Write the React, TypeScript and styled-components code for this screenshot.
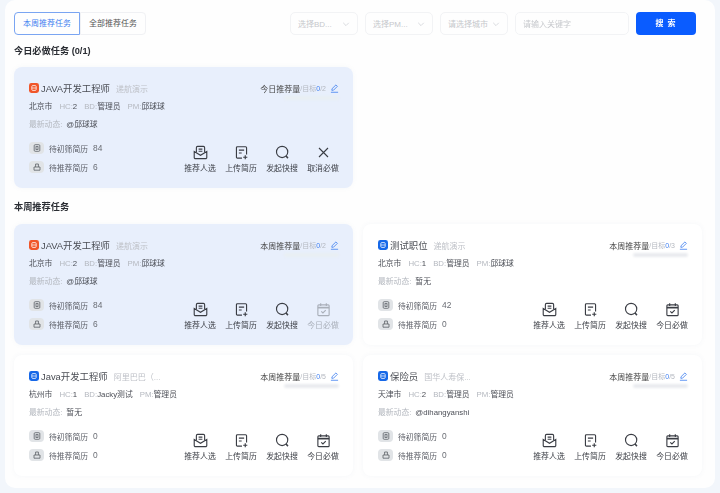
import styled, { createGlobalStyle } from "styled-components";

const GlobalStyle = createGlobalStyle`
  html, body {
    margin: 0;
    padding: 0;
    background: #f2f6fb;
    font-family: "Liberation Sans", "Noto Sans CJK SC", sans-serif;
  }
`;

const Panel = styled.div`
  box-sizing: border-box;
  width: 710px;
  height: 488px;
  margin-left: 5px;
  padding: 12px 13px 0 9px;
  background: #fefefe;
  border-radius: 10px;
  overflow: hidden;
  filter: blur(0.3px);
`;

const Toolbar = styled.div`
  display: flex;
  align-items: center;
  height: 23px;
  padding-right: 6px;
`;

const Tabs = styled.div`
  display: flex;
  margin-right: auto;
`;

const Tab = styled.div<{ $active?: boolean }>`
  box-sizing: border-box;
  width: 66px;
  height: 23px;
  line-height: 21px;
  text-align: center;
  font-size: 8px;
  color: ${(props) => (props.$active ? "#3f7ff0" : "#555")};
  border: 1px solid ${(props) => (props.$active ? "#7aa5f2" : "#f0f1f4")};
  border-radius: ${(props) => (props.$active ? "4px 0 0 4px" : "0 4px 4px 0")};
`;

const Filters = styled.div`
  display: flex;
  gap: 7px;
`;

const Select = styled.div`
  box-sizing: border-box;
  width: 68px;
  height: 23px;
  padding: 0 7px;
  display: flex;
  align-items: center;
  justify-content: space-between;
  font-size: 8px;
  color: #c6c8cc;
  border: 1px solid #f2f3f5;
  border-radius: 5px;
`;

const SearchInput = styled(Select)`
  width: 114px;
`;

const SearchButton = styled.div`
  width: 60px;
  height: 23px;
  line-height: 23px;
  text-align: center;
  font-size: 8px;
  font-weight: 700;
  letter-spacing: 1px;
  color: #fff;
  background: #0a5cff;
  border-radius: 4px;
`;

const SectionTitle = styled.div<{ $top: number; $bottom: number }>`
  margin: ${(props) => props.$top}px 0 ${(props) => props.$bottom}px;
  height: 13px;
  line-height: 13px;
  font-size: 9.2px;
  font-weight: 700;
  color: #2a2d33;
`;

const Grid = styled.div`
  display: grid;
  grid-template-columns: 339px 339px;
  gap: 10px;
`;

const Card = styled.div<{ $highlight?: boolean }>`
  box-sizing: border-box;
  height: 121px;
  padding: 14px 14px 0 15px;
  border-radius: 8px;
  background: ${(props) => (props.$highlight ? "#e8effc" : "#fff")};
  box-shadow: 0 0 5px rgba(120, 140, 170, ${(props) => (props.$highlight ? 0.06 : 0.07)});
`;

const TitleRow = styled.div`
  display: flex;
  align-items: center;
  height: 14px;
`;

const Logo = styled.svg`
  flex: none;
  width: 10px;
  height: 10px;
  margin-right: 2px;
`;

const Name = styled.span`
  font-size: 9.4px;
  color: #4a4d54;
`;

const Company = styled.span`
  margin-left: 6px;
  font-size: 8px;
  color: #bec1c7;
`;

const Target = styled.div`
  margin-left: auto;
  display: flex;
  align-items: center;
  font-size: 8px;
  color: #444;
`;

const TargetHint = styled.span`
  font-size: 7px;
  color: #b4b8c0;
`;

const TargetDone = styled.span`
  font-size: 7px;
  color: #3f7ff0;
`;

const Pencil = styled.svg`
  width: 9px;
  height: 9px;
  margin-left: 4px;
`;

const ProgressTrack = styled.div<{ $highlight?: boolean }>`
  width: 55px;
  height: 4px;
  margin: 1px 0 -5px auto;
  border-radius: 2px;
  background: ${(props) => (props.$highlight ? "#e9eff3" : "#e9ebef")};
  filter: blur(1px);
`;

const MetaRow = styled.div`
  display: flex;
  gap: 7px;
  margin-top: 6px;
  height: 12px;
  line-height: 12px;
  font-size: 7.8px;
  color: #4c4f57;
`;

const Faint = styled.span`
  color: #b4b8bf;
`;

const UpdateRow = styled(MetaRow)`
  gap: 4px;
  margin-top: 6px;
`;

const Bottom = styled.div`
  display: flex;
  justify-content: space-between;
  align-items: flex-end;
  margin-top: 11px;
`;

const Stats = styled.div`
  display: flex;
  flex-direction: column;
  gap: 7px;
`;

const Stat = styled.div`
  display: flex;
  align-items: center;
  height: 12px;
  font-size: 7.8px;
  color: #5c5f67;
`;

const Chip = styled.div`
  width: 15px;
  height: 12px;
  margin-right: 5px;
  display: flex;
  align-items: center;
  justify-content: center;
  background: #e1e4e7;
  border-radius: 4px;
`;

const Count = styled.span`
  margin-left: 5px;
  font-size: 8.4px;
  color: #6a6d74;
`;

const Actions = styled.div`
  display: flex;
  gap: 9px;
  margin-bottom: -2px;
`;

const Action = styled.div<{ $disabled?: boolean }>`
  width: 32px;
  display: flex;
  flex-direction: column;
  align-items: center;
  gap: 3px;
  font-size: 7.9px;
  line-height: 12px;
  white-space: nowrap;
  color: ${(props) => (props.$disabled ? "#a9afb9" : "#3a3d44")};
`;

const ActionIcon = styled.svg`
  width: 15px;
  height: 15px;
  fill: none;
  stroke: currentColor;
  stroke-width: 1.2;
`;

const Arrow = () => (
  <svg width="8" height="8" viewBox="0 0 8 8" fill="none" stroke="#c9ccd1" strokeWidth="0.7">
    <path d="M1.2 2.8 4 5.6l2.8-2.8" />
  </svg>
);

const RecommendIcon = () => (
  <ActionIcon viewBox="0 0 16 16">
    <path d="M3.6 7.6V2.8A1.3 1.3 0 0 1 4.9 1.5h6.2a1.3 1.3 0 0 1 1.3 1.3v4.8" />
    <path d="M6 4.4h4M6 6.6h4" />
    <path d="M1.3 7v6.2a1.3 1.3 0 0 0 1.3 1.3h10.8a1.3 1.3 0 0 0 1.3-1.3V7L8 11z" />
  </ActionIcon>
);

const UploadIcon = () => (
  <ActionIcon viewBox="0 0 16 16">
    <path d="M8.5 14H3.6a1 1 0 0 1-1-1V2.8a1 1 0 0 1 1-1h8.8a1 1 0 0 1 1 1V10" />
    <path d="M5.2 5.5h5.6M5.2 8.5h3" />
    <path d="M12 10.8v4.4M9.8 13h4.4" />
  </ActionIcon>
);

const QuickSearchIcon = () => (
  <ActionIcon viewBox="0 0 16 16">
    <circle cx="7.6" cy="7.4" r="6" />
    <path d="m11.8 11.8 2 2.2" strokeWidth="1.6" />
  </ActionIcon>
);

const CalendarIcon = () => (
  <ActionIcon viewBox="0 0 16 16">
    <rect x="2" y="3" width="12" height="11.5" rx="1" />
    <path d="M2 6h12" strokeWidth="1.8" />
    <path d="M5 1.2v3M11 1.2v3" />
    <path d="m5.6 10 1.8 1.7 3-3" />
  </ActionIcon>
);

const CancelIcon = () => (
  <ActionIcon viewBox="0 0 16 16">
    <path d="m3.2 3.2 9.6 9.6M12.8 3.2l-9.6 9.6" />
  </ActionIcon>
);

const ChipPending = () => (
  <svg width="8" height="8" viewBox="0 0 8 8" fill="none" stroke="#5b5f66" strokeWidth="0.8">
    <rect x="1.2" y="0.7" width="5.6" height="6.6" rx="1" />
    <rect x="3" y="2.6" width="2" height="2.8" />
  </svg>
);

const ChipRecommend = () => (
  <svg width="8" height="8" viewBox="0 0 8 8" fill="none" stroke="#5b5f66" strokeWidth="0.8">
    <path d="M1 4h6v3.2H1zM2.6 4V1h2.8v3" />
  </svg>
);

type Job = {
  name: string;
  company: string;
  city: string;
  hc: number;
  bd: string;
  pm: string;
  update: string;
  goal: number;
  pending: number;
  recommended: number;
  targetLabel: string;
  lastAction: string;
  hot?: boolean;
  highlight?: boolean;
  disabledLast?: boolean;
};

const todayJob: Job = {
  name: "JAVA开发工程师",
  company: "递航演示",
  city: "北京市",
  hc: 2,
  bd: "管理员",
  pm: "邱球球",
  update: "@邱球球",
  goal: 2,
  pending: 84,
  recommended: 6,
  targetLabel: "今日推荐量",
  lastAction: "取消必做",
  hot: true,
  highlight: true,
};

const weekJobs: Job[] = [
  { ...todayJob, targetLabel: "本周推荐量", lastAction: "今日必做", disabledLast: true },
  {
    name: "测试职位",
    company: "递航演示",
    city: "北京市",
    hc: 1,
    bd: "管理员",
    pm: "邱球球",
    update: "暂无",
    goal: 3,
    pending: 42,
    recommended: 0,
    targetLabel: "本周推荐量",
    lastAction: "今日必做",
  },
  {
    name: "Java开发工程师",
    company: "阿里巴巴（...",
    city: "杭州市",
    hc: 1,
    bd: "Jacky测试",
    pm: "管理员",
    update: "暂无",
    goal: 5,
    pending: 0,
    recommended: 0,
    targetLabel: "本周推荐量",
    lastAction: "今日必做",
  },
  {
    name: "保险员",
    company: "国华人寿保...",
    city: "天津市",
    hc: 2,
    bd: "管理员",
    pm: "管理员",
    update: "@dihangyanshi",
    goal: 5,
    pending: 0,
    recommended: 0,
    targetLabel: "本周推荐量",
    lastAction: "今日必做",
  },
];

function JobCard({ job }: { job: Job }) {
  return (
    <Card $highlight={job.highlight}>
      <TitleRow>
        <Logo viewBox="0 0 10 10">
          <rect width="10" height="10" rx="2.4" fill={job.hot ? "#f0562a" : "#1668e8"} />
          <rect x="2.8" y="2.6" width="4.4" height="4.8" rx="1" fill="none" stroke="#fff" strokeWidth="0.8" />
          <path d="M3 5h4" stroke="#fff" strokeWidth="0.7" />
        </Logo>
        <Name>{job.name}</Name>
        <Company>{job.company}</Company>
        <Target>
          {job.targetLabel}
          <TargetHint>/目标</TargetHint>
          <TargetDone>0</TargetDone>
          <TargetHint>/{job.goal}</TargetHint>
          <Pencil viewBox="0 0 10 10" fill="none" stroke="#3f7ff0" strokeWidth="0.9">
            <path d="m2 7 .3-1.8L6.6 1 8.2 2.6 3.9 6.9z" />
            <path d="M1 9.2h8" />
          </Pencil>
        </Target>
      </TitleRow>
      <ProgressTrack $highlight={job.highlight} />
      <MetaRow>
        <span>{job.city}</span>
        <span><Faint>HC:</Faint>{job.hc}</span>
        <span><Faint>BD:</Faint>{job.bd}</span>
        <span><Faint>PM:</Faint>{job.pm}</span>
      </MetaRow>
      <UpdateRow>
        <Faint>最新动态:</Faint>
        <span>{job.update}</span>
      </UpdateRow>
      <Bottom>
        <Stats>
          <Stat>
            <Chip><ChipPending /></Chip>
            待初筛简历
            <Count>{job.pending}</Count>
          </Stat>
          <Stat>
            <Chip><ChipRecommend /></Chip>
            待推荐简历
            <Count>{job.recommended}</Count>
          </Stat>
        </Stats>
        <Actions>
          <Action><RecommendIcon />推荐人选</Action>
          <Action><UploadIcon />上传简历</Action>
          <Action><QuickSearchIcon />发起快搜</Action>
          <Action $disabled={job.disabledLast}>
            {job.lastAction === "取消必做" ? <CancelIcon /> : <CalendarIcon />}
            {job.lastAction}
          </Action>
        </Actions>
      </Bottom>
    </Card>
  );
}

export default function App() {
  return (
    <Panel>
      <GlobalStyle />
      <Toolbar>
        <Tabs>
          <Tab $active>本周推荐任务</Tab>
          <Tab>全部推荐任务</Tab>
        </Tabs>
        <Filters>
          <Select>选择BD...<Arrow /></Select>
          <Select>选择PM...<Arrow /></Select>
          <Select>请选择城市<Arrow /></Select>
          <SearchInput>请输入关键字</SearchInput>
          <SearchButton>搜 索</SearchButton>
        </Filters>
      </Toolbar>
      <SectionTitle $top={10} $bottom={9}>今日必做任务 (0/1)</SectionTitle>
      <Grid>
        <JobCard job={todayJob} />
      </Grid>
      <SectionTitle $top={13} $bottom={10}>本周推荐任务</SectionTitle>
      <Grid>
        {weekJobs.map((job) => (
          <JobCard key={job.name} job={job} />
        ))}
      </Grid>
    </Panel>
  );
}
